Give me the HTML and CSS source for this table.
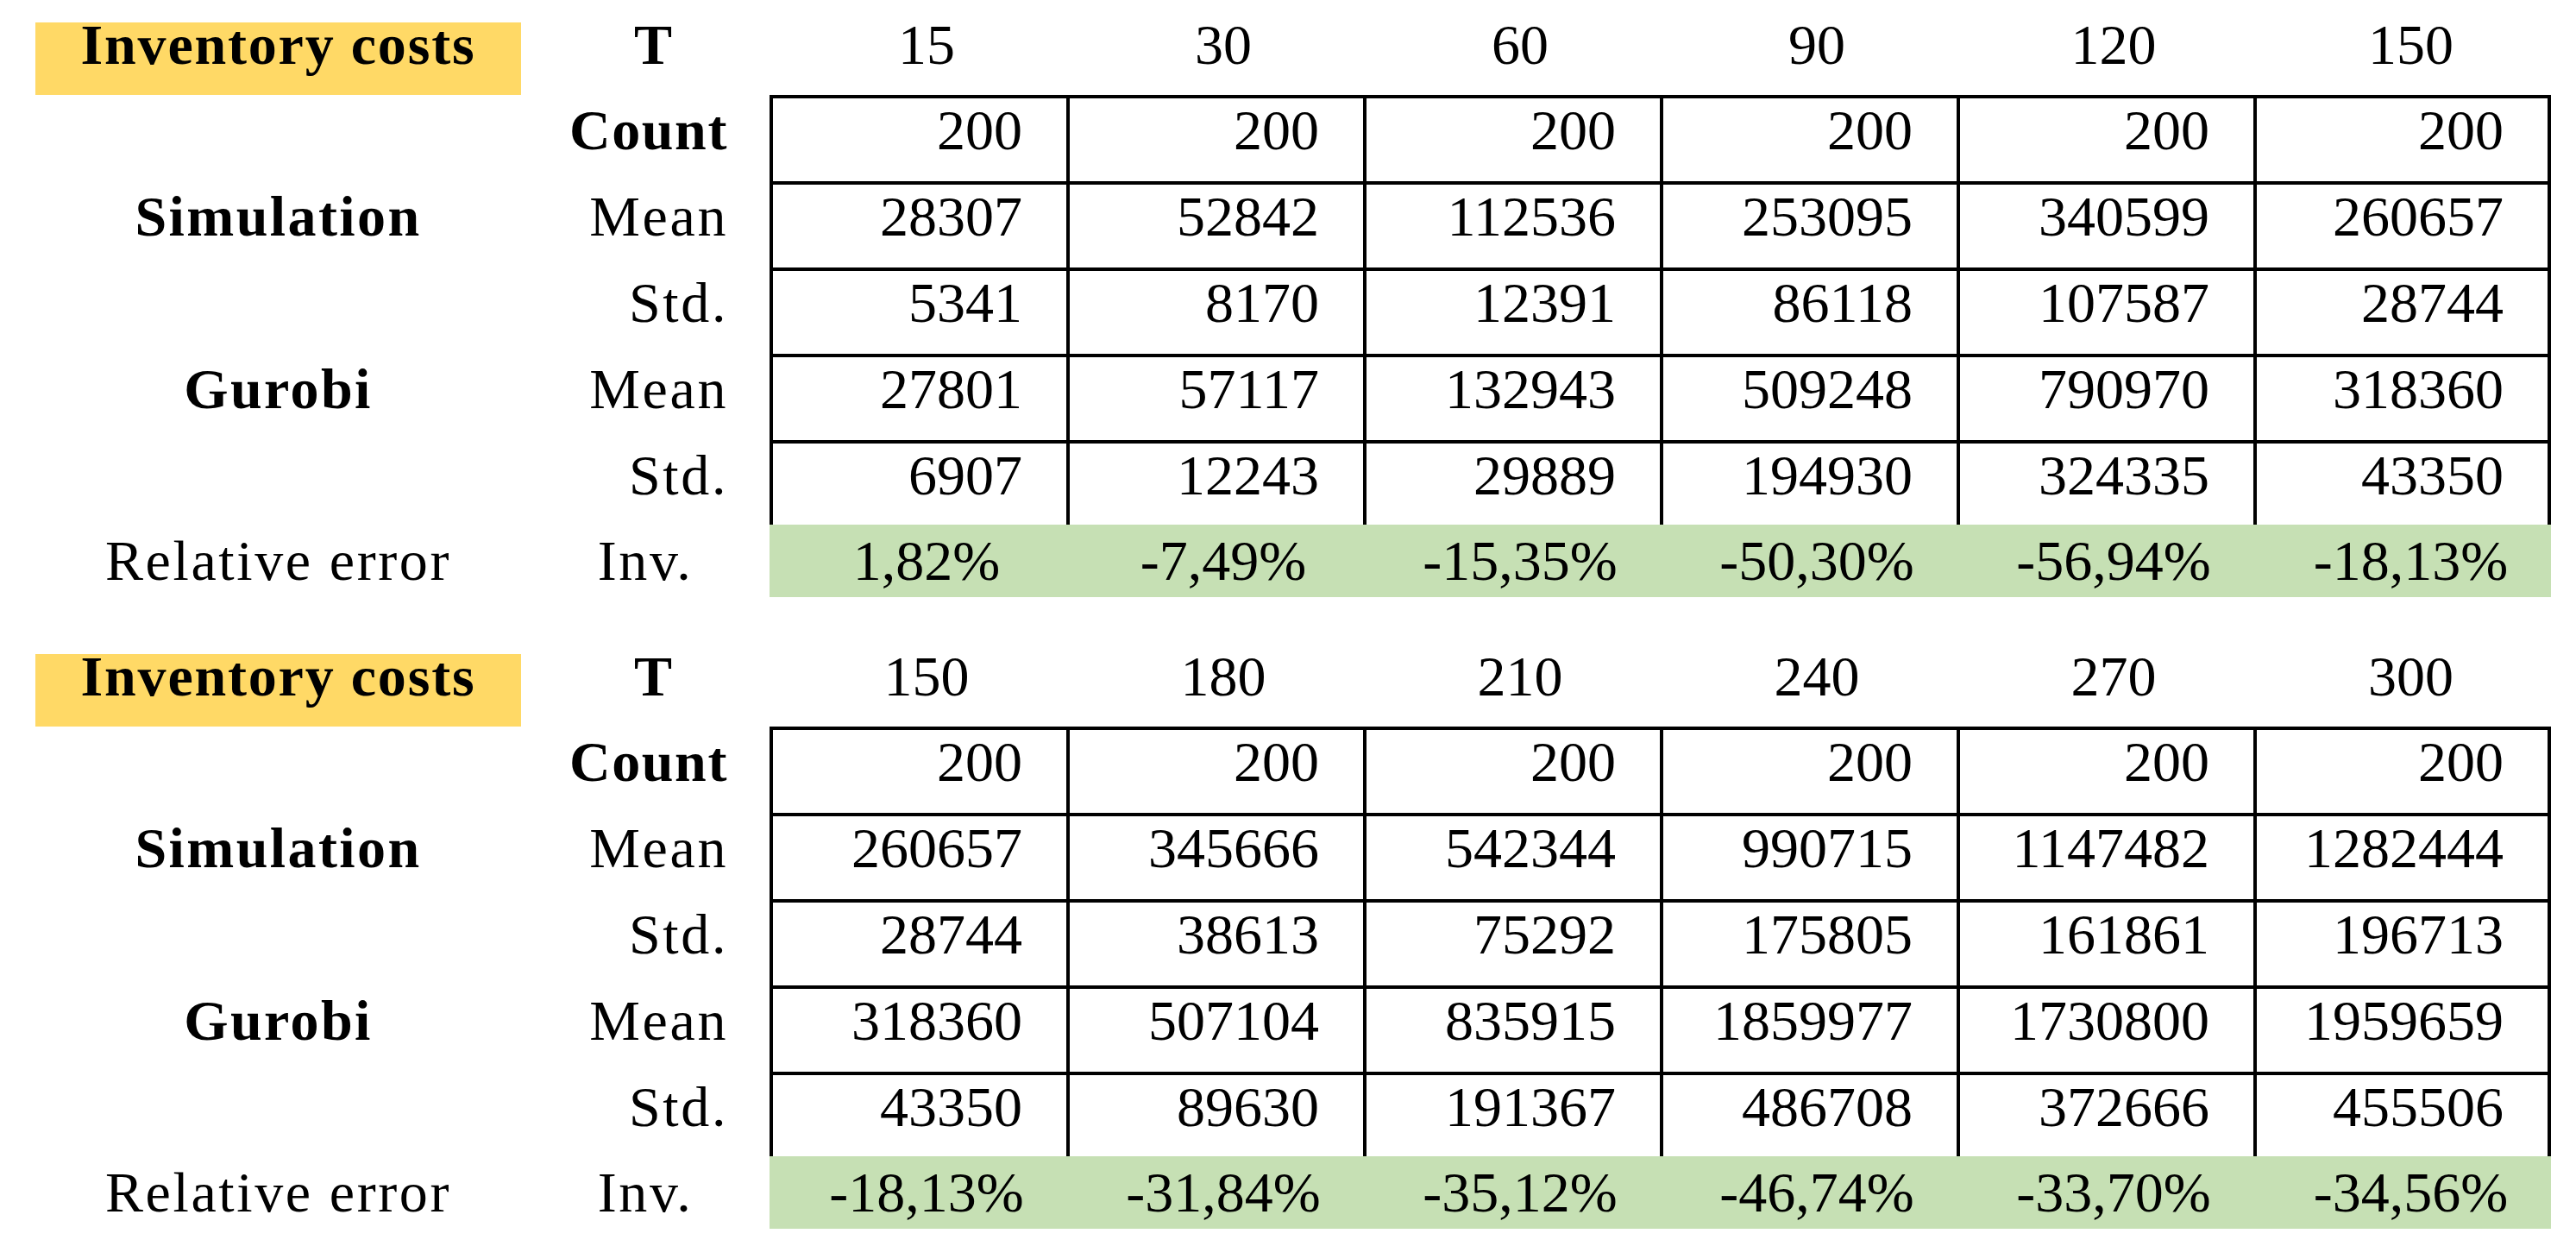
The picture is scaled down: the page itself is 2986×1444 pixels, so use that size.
FILE: index.html
```html
<!DOCTYPE html>
<html>
<head>
<meta charset="utf-8">
<title>Inventory costs</title>
<link rel="stylesheet" href="styles.css">
</head>
<body>
<div class="sheet">
  <div class="block">
    <div class="hd title">Inventory costs</div>
    <div class="hd tlabel">T</div>
    <div class="hd tv">15</div><div class="hd tv">30</div><div class="hd tv">60</div><div class="hd tv">90</div><div class="hd tv">120</div><div class="hd tv">150</div>

    <div class="grp"></div>
    <div class="rl bold">Count</div>
    <div class="d">200</div><div class="d">200</div><div class="d">200</div><div class="d">200</div><div class="d">200</div><div class="d last">200</div>

    <div class="grp bold">Simulation</div>
    <div class="rl">Mean</div>
    <div class="d">28307</div><div class="d">52842</div><div class="d">112536</div><div class="d">253095</div><div class="d">340599</div><div class="d last">260657</div>

    <div class="grp"></div>
    <div class="rl">Std.</div>
    <div class="d">5341</div><div class="d">8170</div><div class="d">12391</div><div class="d">86118</div><div class="d">107587</div><div class="d last">28744</div>

    <div class="grp bold">Gurobi</div>
    <div class="rl">Mean</div>
    <div class="d">27801</div><div class="d">57117</div><div class="d">132943</div><div class="d">509248</div><div class="d">790970</div><div class="d last">318360</div>

    <div class="grp"></div>
    <div class="rl">Std.</div>
    <div class="d">6907</div><div class="d">12243</div><div class="d">29889</div><div class="d">194930</div><div class="d">324335</div><div class="d last">43350</div>

    <div class="grp err">Relative error</div>
    <div class="rl err inv">Inv.</div>
    <div class="g">1,82%</div><div class="g">-7,49%</div><div class="g">-15,35%</div><div class="g">-50,30%</div><div class="g">-56,94%</div><div class="g">-18,13%</div>
  </div>

  <div class="block">
    <div class="hd title">Inventory costs</div>
    <div class="hd tlabel">T</div>
    <div class="hd tv">150</div><div class="hd tv">180</div><div class="hd tv">210</div><div class="hd tv">240</div><div class="hd tv">270</div><div class="hd tv">300</div>

    <div class="grp"></div>
    <div class="rl bold">Count</div>
    <div class="d">200</div><div class="d">200</div><div class="d">200</div><div class="d">200</div><div class="d">200</div><div class="d last">200</div>

    <div class="grp bold">Simulation</div>
    <div class="rl">Mean</div>
    <div class="d">260657</div><div class="d">345666</div><div class="d">542344</div><div class="d">990715</div><div class="d">1147482</div><div class="d last">1282444</div>

    <div class="grp"></div>
    <div class="rl">Std.</div>
    <div class="d">28744</div><div class="d">38613</div><div class="d">75292</div><div class="d">175805</div><div class="d">161861</div><div class="d last">196713</div>

    <div class="grp bold">Gurobi</div>
    <div class="rl">Mean</div>
    <div class="d">318360</div><div class="d">507104</div><div class="d">835915</div><div class="d">1859977</div><div class="d">1730800</div><div class="d last">1959659</div>

    <div class="grp"></div>
    <div class="rl">Std.</div>
    <div class="d">43350</div><div class="d">89630</div><div class="d">191367</div><div class="d">486708</div><div class="d">372666</div><div class="d last">455506</div>

    <div class="grp err">Relative error</div>
    <div class="rl err inv">Inv.</div>
    <div class="g">-18,13%</div><div class="g">-31,84%</div><div class="g">-35,12%</div><div class="g">-46,74%</div><div class="g">-33,70%</div><div class="g">-34,56%</div>
  </div>
</div>
</body>
</html>
```

FILE: styles.css
```css
html, body {
  margin: 0;
  padding: 0;
  background: #ffffff;
}

body {
  font-family: "Liberation Serif", "Times New Roman", serif;
  font-size: 66px;
  color: #000000;
}

.sheet {
  padding: 26px 0 0 41px;
  display: flex;
  flex-direction: column;
  gap: 66px;
}

.block {
  display: grid;
  grid-template-columns: 563px 288px repeat(5, 344px) 345px;
  grid-template-rows: 84px 100px 100px 100px 100px 98px 84px;
}

.block > div {
  box-sizing: border-box;
  white-space: nowrap;
}

/* header row */
.hd {
  line-height: 52px;
}

.title {
  background: #ffd966;
  font-weight: bold;
  text-align: center;
  letter-spacing: 1.8px;
}

.tlabel {
  font-weight: bold;
  text-align: center;
  padding-left: 18px;
}

.tv {
  text-align: center;
  padding-left: 20px;
}

/* left labels */
.grp {
  text-align: center;
  line-height: 66px;
  padding-top: 8px;
  letter-spacing: 2.6px;
}

.rl {
  text-align: right;
  line-height: 66px;
  padding-top: 8px;
  padding-right: 48px;
  letter-spacing: 2.6px;
}

.bold {
  font-weight: bold;
}

.grp.bold {
  letter-spacing: 2.4px;
}

.rl.bold {
  letter-spacing: 1.6px;
}

.err {
  padding-top: 9px;
}

.inv {
  text-align: center;
  padding-right: 0;
}

/* data cells */
.d {
  border-left: 4px solid #000000;
  border-top: 4px solid #000000;
  text-align: right;
  line-height: 66px;
  padding: 4px 51px 0 0;
}

.d.last {
  border-right: 4px solid #000000;
}

/* relative error row */
.g {
  background: #c6e0b4;
  text-align: center;
  line-height: 66px;
  padding-top: 9px;
  padding-left: 20px;
}
```
